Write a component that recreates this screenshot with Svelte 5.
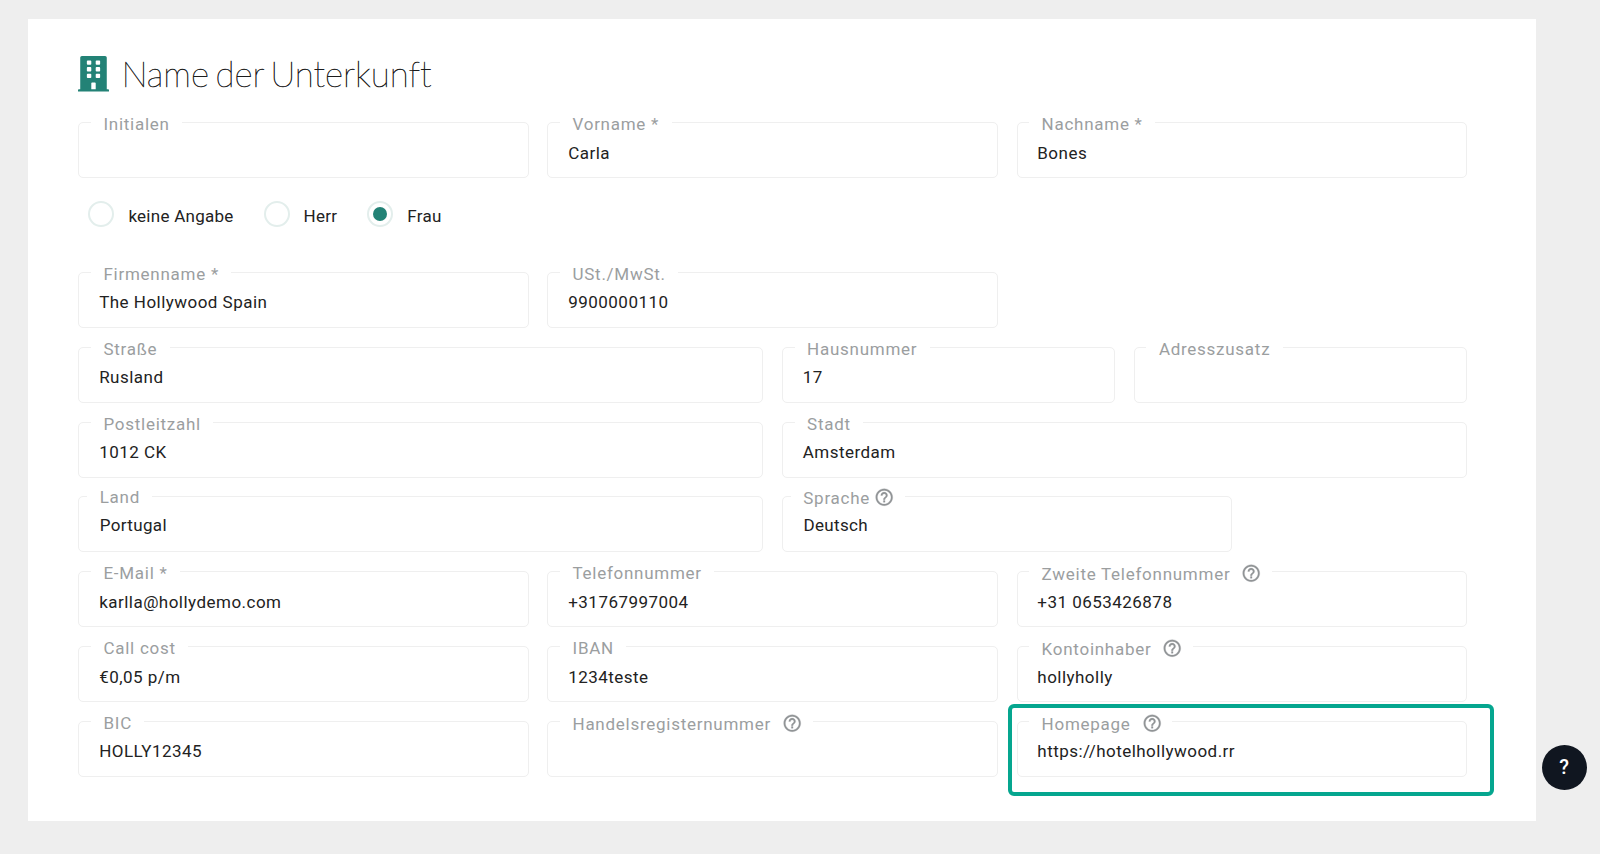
<script>
    let rows = [
        [
            { label: "Initialen", value: "", span: 4 },
            { label: "Vorname *", value: "Carla", span: 4 },
            { label: "Nachname *", value: "Bones", span: 4 },
        ],
        [
            { label: "Firmenname *", value: "The Hollywood Spain", span: 4 },
            { label: "USt./MwSt.", value: "9900000110", span: 4 },
        ],
        [
            { label: "Straße", value: "Rusland", span: 6 },
            { label: "Hausnummer", value: "17", span: 3 },
            { label: "Adresszusatz", value: "", span: 3 },
        ],
        [
            { label: "Postleitzahl", value: "1012 CK", span: 6 },
            { label: "Stadt", value: "Amsterdam", span: 6 },
        ],
        [
            { label: "Land", value: "Portugal", span: 6, select: true },
            { label: "Sprache", value: "Deutsch", span: 4, select: true, help: true },
        ],
        [
            { label: "E-Mail *", value: "karlla@hollydemo.com", span: 4 },
            { label: "Telefonnummer", value: "+31767997004", span: 4 },
            { label: "Zweite Telefonnummer", value: "+31 0653426878", span: 4, help: true },
        ],
        [
            { label: "Call cost", value: "€0,05 p/m", span: 4 },
            { label: "IBAN", value: "1234teste", span: 4 },
            { label: "Kontoinhaber", value: "hollyholly", span: 4, help: true },
        ],
        [
            { label: "BIC", value: "HOLLY12345", span: 4 },
            { label: "Handelsregisternummer", value: "", span: 4, help: true },
            { label: "Homepage", value: "https://hotelhollywood.rr", span: 4, help: true, marked: true },
        ],
    ];

    let salutations = ["keine Angabe", "Herr", "Frau"];
    let salutation = "Frau";
</script>

<section class="card">
    <h1>
        <svg class="building" viewBox="0 0 448 512">
            <path
                fill-rule="evenodd"
                d="M436 480h-20V24c0-13.3-10.700-24-24-24H56C42.700 0 32 10.700 32 24v456H12c-6.600 0-12 5.400-12 12v20h448v-20c0-6.600-5.400-12-12-12zM140 64h40q12 0 12 12v40q0 12-12 12h-40q-12 0-12-12V76q0-12 12-12zM268 64h40q12 0 12 12v40q0 12-12 12h-40q-12 0-12-12V76q0-12 12-12zM140 160h40q12 0 12 12v40q0 12-12 12h-40q-12 0-12-12v-40q0-12 12-12zM268 160h40q12 0 12 12v40q0 12-12 12h-40q-12 0-12-12v-40q0-12 12-12zM140 256h40q12 0 12 12v40q0 12-12 12h-40q-12 0-12-12v-40q0-12 12-12zM268 256h40q12 0 12 12v40q0 12-12 12h-40q-12 0-12-12v-40q0-12 12-12zM204 384h40q12 0 12 12v84h-64v-84q0-12 12-12z"
            />
        </svg>
        <span class="title">Name der Unterkunft</span>
    </h1>

    {#each rows as row, i}
        <div class="row">
            {#each row as field}
                <div class="field span{field.span}" class:select={field.select} class:marked={field.marked}>
                    <div class="label" class:withHelp={field.help}>
                        <span>{field.label}</span>
                        {#if field.help}
                            <svg class="help" viewBox="0 0 24 24">
                                <path d="M11 18h2v-2h-2v2zm1-16C6.480 2 2 6.480 2 12s4.480 10 10 10 10-4.480 10-10S17.520 2 12 2zm0 18c-4.410 0-8-3.590-8-8s3.590-8 8-8 8 3.590 8 8-3.590 8-8 8zm0-14c-2.210 0-4 1.790-4 4h2c0-1.100.9-2 2-2s2 .9 2 2c0 2-3 1.750-3 5h2c0-2.250 3-2.500 3-5 0-2.210-1.790-4-4-4z" />
                            </svg>
                        {/if}
                    </div>
                    <div class="value">{field.value}</div>
                </div>
            {/each}
        </div>
        {#if i === 0}
            <div class="radios">
                {#each salutations as item}
                    <button class="radio" on:click={() => (salutation = item)}>
                        <span class="circle" class:checked={salutation === item}></span>
                        <span class="text">{item}</span>
                    </button>
                {/each}
            </div>
        {/if}
    {/each}
</section>

<button class="support">?</button>

<style>
    :global(body) {
        margin: 0;
        background: #eeeeee;
        font-family: Roboto, sans-serif;
    }
    .card {
        box-sizing: border-box;
        width: 1507.5px;
        height: 802px;
        margin: 19px 0 0 28.2px;
        padding: 35px 68.9px 0 50.2px;
        background: #fff;
    }
    h1 {
        display: flex;
        align-items: center;
        gap: 12px;
        height: 40px;
        margin: 0 0 28px;
        font-family: Lato, sans-serif;
        font-size: 35px;
        font-weight: 100;
        color: #1c1c1c;
    }
    .title {
        padding-bottom: 2px;
        letter-spacing: -0.05px;
        word-spacing: -3.4px;
        -webkit-text-stroke: 0.5px #1c1c1c;
    }
    .building {
        width: 31px;
        height: 35.4px;
        fill: #238276;
    }
    .row {
        display: grid;
        grid-template-columns: repeat(12, 1fr);
        column-gap: 18.8px;
        margin-bottom: 18.85px;
    }
    .field {
        position: relative;
        box-sizing: border-box;
        height: 56px;
        padding: 16.55px 20px 0 19.8px;
        border: 1px solid #efefef;
        border-radius: 5px;
    }
    .span3 {
        grid-column: span 3;
    }
    .span4 {
        grid-column: span 4;
    }
    .span6 {
        grid-column: span 6;
    }
    .label {
        position: absolute;
        top: -10px;
        left: 11.6px;
        display: flex;
        align-items: center;
        gap: 13px;
        height: 22px;
        padding: 0 12.5px;
        background: #fff;
        color: #9b9e9f;
        font-size: 17px;
        letter-spacing: 0.73px;
        white-space: nowrap;
    }
    .withHelp {
        top: -9.4px;
    }
    .help {
        width: 20.4px;
        height: 20.4px;
        margin: -1px -2px 0;
        fill: #919496;
        stroke: #919496;
        stroke-width: 0.3;
    }
    .value {
        height: 26px;
        line-height: 26px;
        font-size: 17px;
        letter-spacing: 0.47px;
        color: #222;
        white-space: nowrap;
    }
    .select {
        padding-top: 15px;
        padding-left: 20.4px;
    }
    .select .value {
        letter-spacing: 0.35px;
    }
    .select .label {
        top: -11px;
        left: 7.8px;
        gap: 6px;
    }
    .select .withHelp {
        top: -10.5px;
    }
    .marked::after {
        content: "";
        position: absolute;
        box-sizing: border-box;
        left: -10px;
        top: -17.5px;
        width: 486px;
        height: 92px;
        border: 4px solid #05a68f;
        border-radius: 6px;
    }
    .radios {
        display: flex;
        gap: 30px;
        height: 75px;
        padding-left: 10px;
    }
    .radio {
        display: flex;
        align-items: center;
        gap: 14px;
        height: 36px;
        padding: 0;
        border: none;
        background: none;
        font-family: inherit;
        font-size: 17px;
        letter-spacing: 0.26px;
        color: #222;
        cursor: pointer;
    }
    .text {
        padding-top: 2px;
    }
    .circle {
        display: flex;
        align-items: center;
        justify-content: center;
        box-sizing: border-box;
        width: 26px;
        height: 26px;
        margin-bottom: 2px;
        border: 2px solid #e3eeec;
        border-radius: 50%;
    }
    .checked::before {
        content: "";
        width: 14px;
        height: 14px;
        border-radius: 50%;
        background: #238276;
    }
    .support {
        position: fixed;
        left: 1541.5px;
        top: 744.5px;
        width: 45px;
        height: 45px;
        padding: 0;
        border: none;
        border-radius: 50%;
        background: #101620;
        color: #fff;
        font-family: Roboto, sans-serif;
        font-size: 20px;
        font-weight: 500;
    }
</style>
